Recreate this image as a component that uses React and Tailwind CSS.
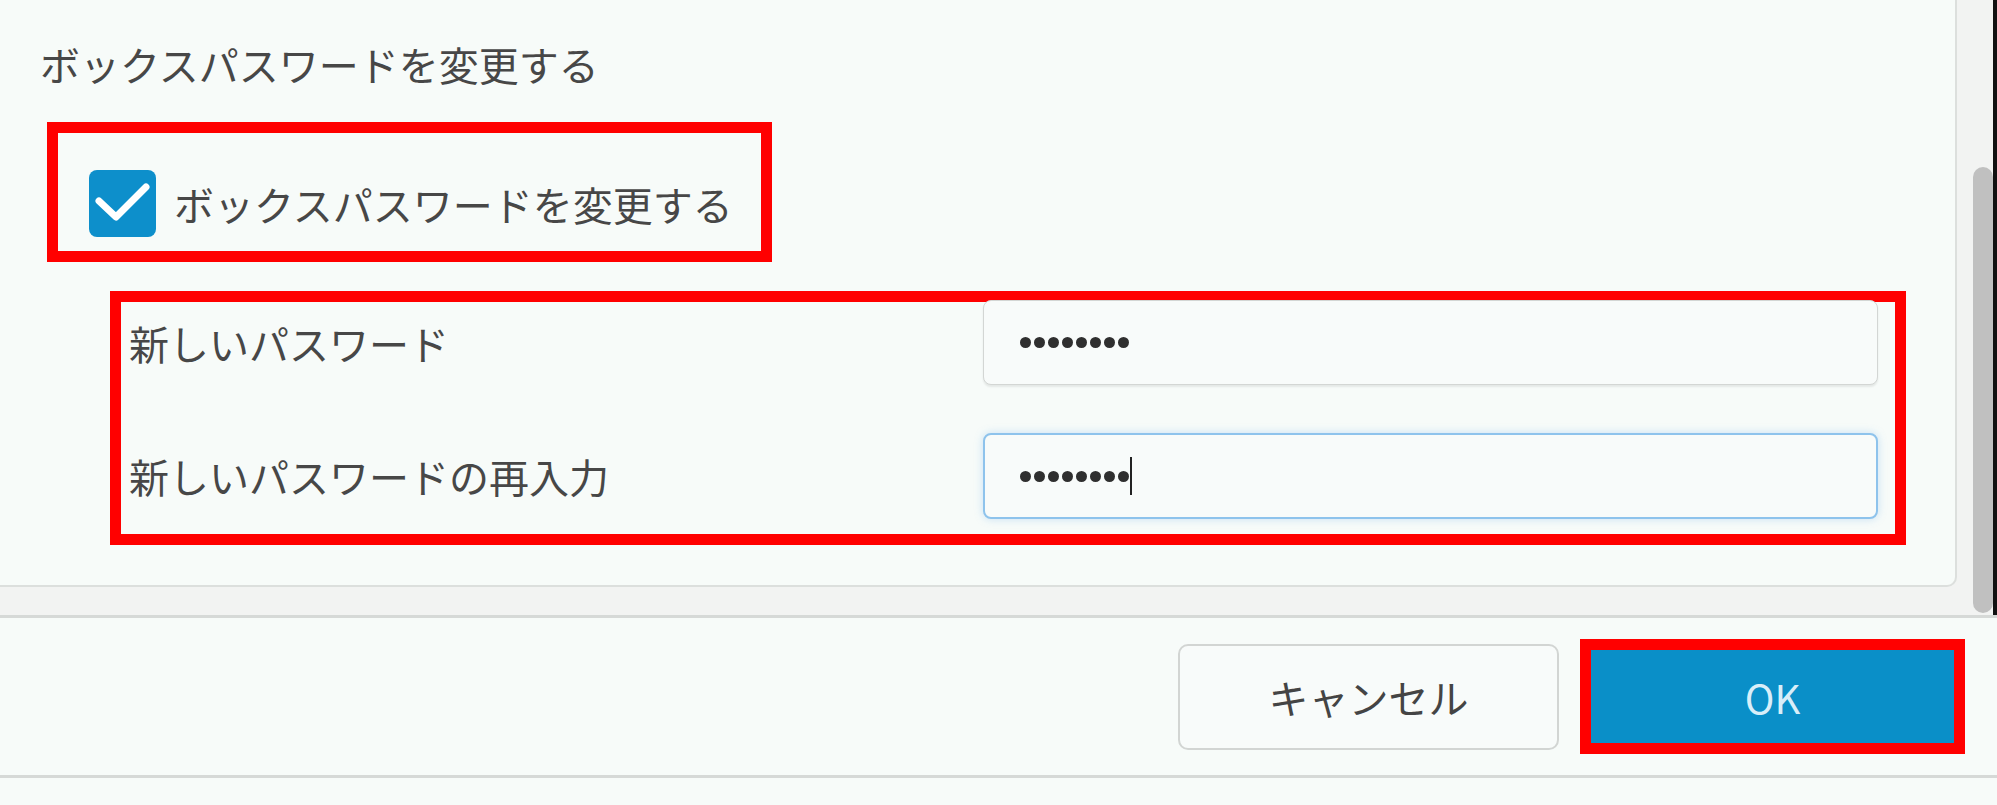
import React from "react";

const FONT = "font-['Noto_Sans_CJK_JP','Noto_Sans',sans-serif]";

function Dots({ cursor }) {
  return (
    <div className="flex items-center gap-[3px]">
      {[0, 1, 2, 3, 4, 5, 6, 7].map((i) => (
        <span key={i} className="block w-[11px] h-[11px] rounded-full bg-[#2f2f2f]" />
      ))}
      {cursor && <span className="block w-[2px] h-[38px] bg-[#222] ml-[-2px]" />}
    </div>
  );
}

export default function App() {
  return (
    <div className={`w-[1997px] h-[805px] bg-[#f7fbf9] flex flex-col overflow-hidden text-[#474747] ${FONT}`}>
      {/* top area with scroll panel */}
      <div className="flex h-[618px] bg-[#f2f3f2] border-b-[3px] border-[#d6d9d7] shrink-0">
        <div className="w-[1957px] h-[587px] bg-[#f7fbf9] border-r-2 border-b-2 border-[#dcdfdd] rounded-br-[10px] flex flex-col">
          <div className="pt-[40px] pl-[40px] text-[40px] leading-[48px]">ボックスパスワードを変更する</div>

          <div className="mt-[34px] ml-[47px] w-[725px] h-[140px] border-[11px] border-[#ff0000] pt-[37px] pl-[31px]">
            <div className="flex items-center gap-[18px]">
              <div className="w-[67px] h-[67px] rounded-[8px] bg-[#0d8fcb] flex items-center justify-center">
                <svg width="67" height="67" viewBox="0 0 67 67">
                  <path d="M10 31 L27 47 L57 17" fill="none" stroke="#ffffff" strokeWidth="7" strokeLinecap="round" strokeLinejoin="round" />
                </svg>
              </div>
              <span className="text-[40px] leading-[48px]">ボックスパスワードを変更する</span>
            </div>
          </div>

          <div className="mt-[29px] ml-[110px] w-[1796px] h-[254px] border-[11px] border-[#ff0000] pl-[8px] pr-[17px] flex flex-col">
            <div className="flex items-center mt-[-2px]">
              <div className="w-[854px] text-[40px] leading-[48px]">新しいパスワード</div>
              <div className="flex-1 h-[85px] rounded-[8px] border-[1.5px] border-[#d3d6d4] bg-[#f8fbfa] shadow-[0_2px_2px_rgba(0,0,0,0.08)] flex items-center pl-[36px]">
                <Dots />
              </div>
            </div>
            <div className="flex items-center mt-[48px]">
              <div className="w-[854px] text-[40px] leading-[48px]">新しいパスワードの再入力</div>
              <div className="flex-1 h-[86px] rounded-[8px] border-2 border-[#8ec3ec] bg-[#f8fbfa] shadow-[0_0_8px_rgba(110,175,235,0.35)] flex items-center pl-[35px]">
                <Dots cursor />
              </div>
            </div>
          </div>
        </div>
        <div className="w-[16px]" />
        <div className="w-[20px] flex flex-col">
          <div className="mt-[167px] h-[446px] w-[20px] rounded-full bg-[#c0c0c0]" />
        </div>
        <div className="w-[4px] bg-[#111]" />
      </div>

      {/* footer */}
      <div className="h-[160px] shrink-0 border-b-[3px] border-[#d6d9d7] flex items-center justify-end gap-[21px] pr-[32px]">
        <button className="w-[381px] h-[106px] rounded-[10px] border-2 border-[#d2d5d3] bg-[#f8fbfa] text-[40px] leading-[48px] text-[#444]">
          キャンセル
        </button>
        <button className="w-[385px] h-[115px] border-[11px] border-[#ff0000] bg-[#0a8fc8] text-[40px] leading-[48px] text-[#d8eef9]">
          OK
        </button>
      </div>
    </div>
  );
}
